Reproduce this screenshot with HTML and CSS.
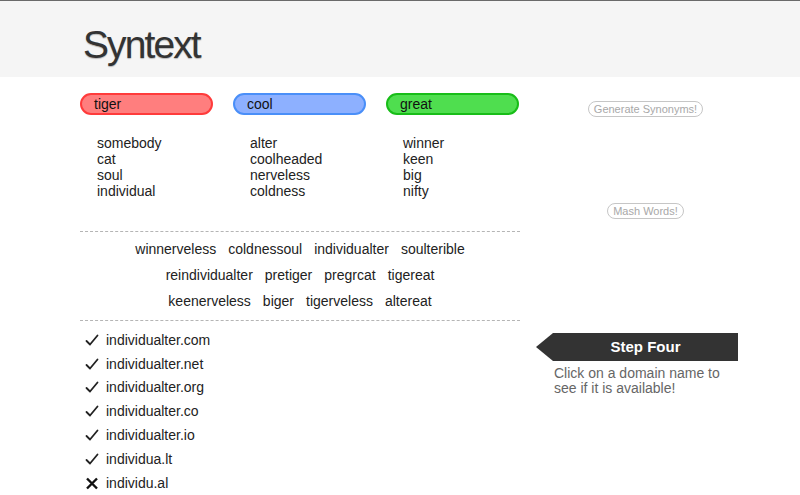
FILE: index.html
```html
<!DOCTYPE html>
<html>
<head>
<meta charset="utf-8">
<link rel="stylesheet" href="styles.css">
</head>
<body>
<header class="header">
  <h1 class="title">Syntext</h1>
</header>
<main class="main">
  <section class="left">
    <div class="inputs">
      <div class="word-input red">tiger</div>
      <div class="word-input blue">cool</div>
      <div class="word-input green">great</div>
    </div>
    <div class="lists">
      <ul class="syn">
        <li>somebody</li><li>cat</li><li>soul</li><li>individual</li>
      </ul>
      <ul class="syn">
        <li>alter</li><li>coolheaded</li><li>nerveless</li><li>coldness</li>
      </ul>
      <ul class="syn">
        <li>winner</li><li>keen</li><li>big</li><li>nifty</li>
      </ul>
    </div>
    <div class="mash">
      <div class="mash-row"><span>winnerveless</span><span>coldnessoul</span><span>individualter</span><span>soulterible</span></div>
      <div class="mash-row"><span>reindividualter</span><span>pretiger</span><span>pregrcat</span><span>tigereat</span></div>
      <div class="mash-row"><span>keenerveless</span><span>biger</span><span>tigerveless</span><span>altereat</span></div>
    </div>
    <ul class="domains">
      <li><svg class="mark" viewBox="0 0 14 14"><path d="M1.5 8 L5 11.5 L12.5 2.5" fill="none" stroke="#222" stroke-width="1.8" stroke-linecap="round" stroke-linejoin="round"/></svg>individualter.com</li>
      <li><svg class="mark" viewBox="0 0 14 14"><path d="M1.5 8 L5 11.5 L12.5 2.5" fill="none" stroke="#222" stroke-width="1.8" stroke-linecap="round" stroke-linejoin="round"/></svg>individualter.net</li>
      <li><svg class="mark" viewBox="0 0 14 14"><path d="M1.5 8 L5 11.5 L12.5 2.5" fill="none" stroke="#222" stroke-width="1.8" stroke-linecap="round" stroke-linejoin="round"/></svg>individualter.org</li>
      <li><svg class="mark" viewBox="0 0 14 14"><path d="M1.5 8 L5 11.5 L12.5 2.5" fill="none" stroke="#222" stroke-width="1.8" stroke-linecap="round" stroke-linejoin="round"/></svg>individualter.co</li>
      <li><svg class="mark" viewBox="0 0 14 14"><path d="M1.5 8 L5 11.5 L12.5 2.5" fill="none" stroke="#222" stroke-width="1.8" stroke-linecap="round" stroke-linejoin="round"/></svg>individualter.io</li>
      <li><svg class="mark" viewBox="0 0 14 14"><path d="M1.5 8 L5 11.5 L12.5 2.5" fill="none" stroke="#222" stroke-width="1.8" stroke-linecap="round" stroke-linejoin="round"/></svg>individua.lt</li>
      <li><svg class="mark" viewBox="0 0 14 14"><path d="M2 2.5 L12 12.5 M12 2.5 L2 12.5" fill="none" stroke="#111" stroke-width="2.4" stroke-linecap="butt"/></svg>individu.al</li>
    </ul>
  </section>
  <aside class="right">
    <button class="ghost btn-gen">Generate Synonyms!</button>
    <button class="ghost btn-mash">Mash Words!</button>
    <div class="step">Step Four</div>
    <p class="hint">Click on a domain name to<br>see if it is available!</p>
  </aside>
</main>
</body>
</html>
```

FILE: styles.css
```css
html, body {
  margin: 0;
  padding: 0;
  background: #fff;
}
body {
  font-family: "Liberation Sans", Arial, sans-serif;
  color: #222;
  font-size: 14px;
}
.header {
  border-top: 1px solid #6a6a6a;
  background: #f5f5f5;
  height: 77px;
  padding-left: 83px;
  box-sizing: border-box;
}
.title {
  margin: 0;
  padding-top: 22px;
  font-weight: normal;
  font-size: 39px;
  line-height: 44px;
  letter-spacing: -1.9px;
  color: #333;
  text-shadow: 0 1px 1px rgba(0,0,0,0.25);
}
.main {
  display: grid;
  grid-template-columns: 440px 185px;
  column-gap: 33px;
  margin-left: 80px;
  padding-top: 16px;
}
.left {
  display: flex;
  flex-direction: column;
}
.inputs {
  display: flex;
  gap: 20px;
}
.word-input {
  width: 133px;
  height: 22px;
  box-sizing: border-box;
  border: 2px solid;
  border-radius: 11px;
  padding-left: 12px;
  font-size: 14px;
  line-height: 18px;
  color: #111;
}
.red { background: #ff7e7e; border-color: #ff3b3b; }
.blue { background: #8db0ff; border-color: #4a8ff8; }
.green { background: #4fde4f; border-color: #18bd18; }
.lists {
  display: flex;
  gap: 20px;
  margin-top: 20px;
}
.syn {
  list-style: none;
  margin: 0;
  padding: 0 0 0 17px;
  width: 133px;
  box-sizing: border-box;
  line-height: 16px;
  color: #222;
}
.mash {
  margin-top: 32px;
  border-top: 1px dashed #b5b5b5;
  border-bottom: 1px dashed #b5b5b5;
  padding: 4px 0 6px;
}
.mash-row {
  display: flex;
  justify-content: center;
  gap: 12px;
  line-height: 26px;
  color: #222;
}
.domains {
  list-style: none;
  margin: 0;
  padding: 7px 0 0 5px;
}
.domains li {
  display: flex;
  align-items: center;
  height: 23.8px;
  color: #222;
}
.mark {
  width: 14px;
  height: 14px;
  margin-right: 7px;
  flex: none;
}
.right {
  display: flex;
  flex-direction: column;
  align-items: center;
}
.ghost {
  font-family: "Liberation Sans", Arial, sans-serif;
  font-size: 11px;
  line-height: 12px;
  color: #a8a8a8;
  background: #fff;
  border: 1.5px solid #c6c6c6;
  border-radius: 8px;
  padding: 0 5px;
  height: 16px;
  box-sizing: border-box;
}
.btn-gen {
  margin-top: 8px;
}
.btn-mash {
  margin-top: 86px;
}
.step {
  align-self: stretch;
  margin-top: 114px;
  margin-left: -17px;
  height: 28px;
  padding-left: 17px;
  background: #333;
  color: #fff;
  font-weight: bold;
  font-size: 15px;
  line-height: 28px;
  text-align: center;
  clip-path: polygon(17px 0, 100% 0, 100% 100%, 17px 100%, 0 50%);
}
.hint {
  align-self: stretch;
  margin: 5px 0 0 1px;
  font-size: 14px;
  line-height: 15px;
  color: #666;
}
```
